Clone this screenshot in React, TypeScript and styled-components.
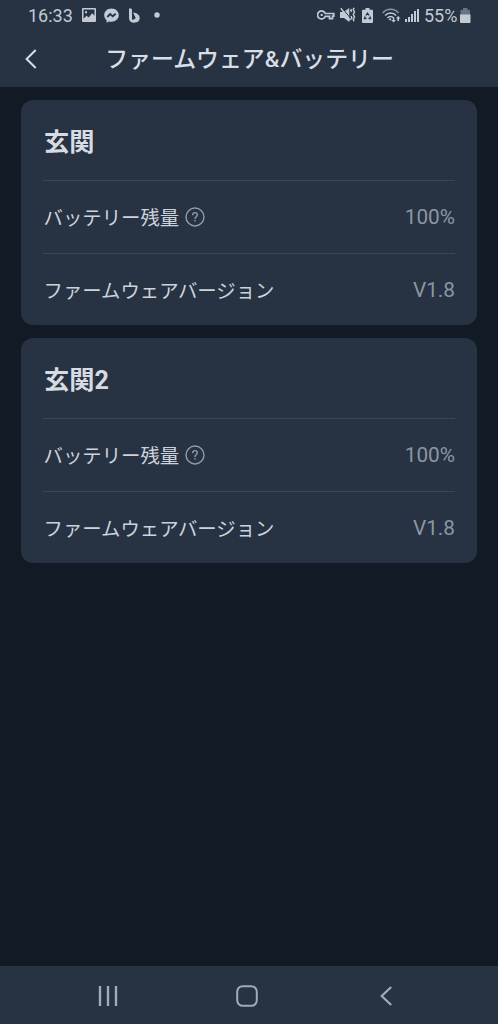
import React from 'react';
import styled, { createGlobalStyle } from 'styled-components';

const GlobalStyle = createGlobalStyle`
  * { box-sizing: border-box; }
  body {
    margin: 0;
    background: #121a26;
    font-family: Roboto, 'Noto Sans CJK JP', sans-serif;
  }
`;

const Screen = styled.div`
  display: flex;
  flex-direction: column;
  height: 1024px;
  width: 498px;
  background: #121a26;
  overflow: hidden;
`;

const StatusBar = styled.div`
  display: flex;
  justify-content: space-between;
  height: 30px;
  padding: 0 27px 0 28px;
  background: #273242;
  color: #c3cad4;
`;

const StatusGroup = styled.div`
  display: flex;
  align-items: center;
`;

const StatusText = styled.span<{ $width: number; $gap?: number }>`
  width: ${(p) => p.$width}px;
  margin-left: ${(p) => p.$gap ?? 0}px;
  font-size: 18px;
  line-height: 31px;
  white-space: nowrap;
`;

const StatusIcon = styled.svg<{ $gap?: number }>`
  flex: none;
  display: block;
  margin-left: ${(p) => p.$gap ?? 0}px;
`;

const Header = styled.header`
  display: grid;
  grid-template-columns: 60px 1fr 60px;
  align-items: center;
  height: 57px;
  background: #273242;
  color: #d7dee8;
`;

const BackButton = styled.button`
  display: flex;
  padding: 0 0 1px 24px;
  border: 0;
  background: none;
  color: inherit;
`;

const PageTitle = styled.h1`
  margin: 0;
  padding: 2px 0 0 1px;
  font-size: 22.9px;
  font-weight: 500;
  line-height: 56px;
  text-align: center;
  white-space: nowrap;
`;

const Content = styled.main`
  flex: 1;
  display: flex;
  flex-direction: column;
  gap: 13px;
  padding: 13px 21px 0;
`;

const Card = styled.section`
  height: 225px;
  padding: 0 22px;
  border-radius: 12px;
  background: #273242;
`;

const CardTitle = styled.h2`
  margin: 0;
  height: 80px;
  padding-left: 1px;
  font-size: 25.2px;
  font-weight: 700;
  line-height: 85px;
  color: #d7dce3;
`;

const Row = styled.div`
  display: flex;
  align-items: center;
  justify-content: space-between;
  height: 73px;
  border-top: 1px solid #3b4655;
`;

const Label = styled.span`
  display: flex;
  align-items: center;
  gap: 6px;
  padding: 0 0 2px 0.5px;
  font-size: 19.4px;
  color: #ccd3dc;
  white-space: nowrap;
`;

const Value = styled.span`
  font-size: 20.8px;
  color: #8c96a3;
`;

const HelpIcon = styled.svg`
  display: block;
  margin-top: 2px;
  color: #929ca9;
`;

const NavBar = styled.nav`
  display: grid;
  grid-template-columns: repeat(3, 139px);
  justify-content: center;
  align-items: center;
  justify-items: center;
  height: 58px;
  padding: 1px 5px 0 0;
  background: #273242;
  color: #a0abb9;
`;

const devices = [
  { name: '玄関', battery: '100%', firmware: 'V1.8' },
  { name: '玄関2', battery: '100%', firmware: 'V1.8' },
];

const Help = () => (
  <HelpIcon width="20" height="20" viewBox="0 0 20 20" fill="none" stroke="currentColor" strokeWidth="1.4">
    <circle cx="10" cy="10" r="9" />
    <path d="M7.7 8.200c0-1.500.9-2.600 2.300-2.600s2.300.9 2.300 2.200c0 1.900-2.300 2-2.300 4.100M10 13v1.600" />
  </HelpIcon>
);

const StatusLeft = () => (
  <StatusGroup>
    <StatusText $width={45}>16:33</StatusText>
    <StatusIcon $gap={9} width="14" height="14" viewBox="0 0 14 14">
      <path
        fill="currentColor"
        fillRule="evenodd"
        d="M1 0h12a1 1 0 0 1 1 1v12a1 1 0 0 1-1 1H1a1 1 0 0 1-1-1V1a1 1 0 0 1 1-1Zm.5 1.500v9.200l3-3 2.200 1.800 3.500-4.200 2.300 2.400V1.500ZM3 3.200h2v2H3Z"
      />
    </StatusIcon>
    <StatusIcon $gap={8} width="15" height="15" viewBox="0 0 15 15">
      <path
        fill="currentColor"
        d="M7.5.4C3.3.4.2 3.3.2 7.100c0 2.100.9 3.900 2.400 5.100v2.500L5 13.400c.8.2 1.600.4 2.500.4 4.200 0 7.300-2.900 7.300-6.700S11.700.4 7.500.4Z"
      />
      <path d="m3.300 9 2.900-3 2.500 2.300L11.700 5.700" fill="none" stroke="#273242" strokeWidth="1.800" />
    </StatusIcon>
    <StatusIcon $gap={10} width="11" height="15" viewBox="0 0 11 15">
      <path
        fill="currentColor"
        fillRule="evenodd"
        d="M0 .5h1.600C2.600.5 3 1 3 2v8.500c0 1 .4 1.500 1.200 1.200L6 10.800c.7-.4.700-.9.300-1.600L4 4.500c3.800.4 6.700 2.300 6.700 5.500 0 2.800-2.200 4.700-5.500 4.700C1.900 14.700 0 13 0 10Z"
      />
    </StatusIcon>
    <StatusIcon $gap={14} width="6" height="6" viewBox="0 0 6 6">
      <circle cx="3" cy="3" r="2.7" fill="currentColor" />
    </StatusIcon>
  </StatusGroup>
);

const StatusRight = () => (
  <StatusGroup>
    <StatusIcon width="18" height="10" viewBox="0 0 18 10">
      <path
        d="M8.300 3.500h8.500v2.600h-1.300v2.500h-3V6.300H8.300A4 4 0 1 1 8.300 3.500Z"
        fill="none"
        stroke="currentColor"
        strokeWidth="1.700"
      />
      <circle cx="4.700" cy="4.900" r="1.200" fill="currentColor" />
    </StatusIcon>
    <StatusIcon $gap={5} width="16" height="16" viewBox="0 0 16 16">
      <path d="M0 5h3.500L9.300 1v14L4 11H0Z" fill="currentColor" />
      <path d="m2 .8 8.500 10.500" stroke="#273242" strokeWidth="1" />
      <path d="m.8 1.200 9.500 12" stroke="currentColor" strokeWidth="1.400" />
      <path
        d="m11.500 2-.6 1.500.8 1.500M11 9l.8 1.700-.8 1.700M14 .8l-.7 2 1.200 2.200-1.200 2.500 1.200 2.500-1.200 2.200.7 2"
        fill="none"
        stroke="currentColor"
        strokeWidth="1.500"
      />
    </StatusIcon>
    <StatusIcon $gap={6} width="11" height="15" viewBox="0 0 11 15">
      <path
        d="M3.500 0h4v1.800H10a1 1 0 0 1 1 1V14a1 1 0 0 1-1 1H1a1 1 0 0 1-1-1V2.800a1 1 0 0 1 1-1h2.500Z"
        fill="currentColor"
      />
      <path d="m3.900 7.500 1.600-2.300 1.600 2.300M7.900 8.500l.6 2H6.500M4.500 10.500h-2l.6-2" fill="none" stroke="#273242" strokeWidth="1.300" />
    </StatusIcon>
    <StatusIcon $gap={9} width="19" height="15" viewBox="0 0 19 15">
      <g fill="none" stroke="currentColor" strokeWidth="1.500">
        <path d="M.7 4.900c4.200-4.900 11.600-4.900 15.800 0" opacity=".65" />
        <path d="M3.100 7.400c3-3.300 8-3.300 11 0M5.500 9.900c1.800-1.900 4.400-1.900 6.200 0" />
      </g>
      <path
        d="m6.500 11 1.800-.7 1.200.7-1.200 1.800ZM12.300 9.800v2.200h1.500l-2.200 2.500L9.300 12h1.600V9.800ZM15.400 13v-2.500h-1.500L16.200 8l2.300 2.500H17V13Z"
        fill="currentColor"
      />
    </StatusIcon>
    <StatusIcon $gap={4} width="14" height="15" viewBox="0 0 14 15">
      <path d="M0 11h2v3H0zM3 9h2v5H3zM6 6h2v8H6zM9 3h2v11H9zM12 1h2v13h-2z" fill="currentColor" />
    </StatusIcon>
    <StatusText $width={36} $gap={5}>55%</StatusText>
    <StatusIcon width="11" height="15" viewBox="0 0 11 15">
      <path d="M3 0h4.500v2H10v5H.5V2H3Z" fill="#687483" />
      <path d="M0 6.500h10.500V14a1 1 0 0 1-1 1H1a1 1 0 0 1-1-1Z" fill="currentColor" />
    </StatusIcon>
  </StatusGroup>
);

export default function App() {
  return (
    <>
      <GlobalStyle />
      <Screen>
        <StatusBar>
          <StatusLeft />
          <StatusRight />
        </StatusBar>
        <Header>
          <BackButton aria-label="戻る">
            <svg width="14" height="20" viewBox="0 0 14 20" fill="none" stroke="currentColor" strokeWidth="2">
              <path d="M11.700 1 2.600 10l9.100 9" />
            </svg>
          </BackButton>
          <PageTitle>ファームウェア&amp;バッテリー</PageTitle>
        </Header>
        <Content>
          {devices.map((d) => (
            <Card key={d.name}>
              <CardTitle>{d.name}</CardTitle>
              <Row>
                <Label>
                  バッテリー残量
                  <Help />
                </Label>
                <Value>{d.battery}</Value>
              </Row>
              <Row>
                <Label>ファームウェアバージョン</Label>
                <Value>{d.firmware}</Value>
              </Row>
            </Card>
          ))}
        </Content>
        <NavBar>
          <svg width="20" height="20" viewBox="0 0 20 20" fill="none" stroke="currentColor" strokeWidth="2.400">
            <path d="M2 0v20M10 0v20M18 0v20" />
          </svg>
          <svg width="22" height="22" viewBox="0 0 22 22" fill="none" stroke="currentColor" strokeWidth="2">
            <rect x="1.200" y="1.200" width="19.600" height="19.600" rx="5.500" />
          </svg>
          <svg width="12" height="20" viewBox="0 0 12 20" fill="none" stroke="currentColor" strokeWidth="2.200">
            <path d="M11.200 1 1.700 10l9.500 9" />
          </svg>
        </NavBar>
      </Screen>
    </>
  );
}
